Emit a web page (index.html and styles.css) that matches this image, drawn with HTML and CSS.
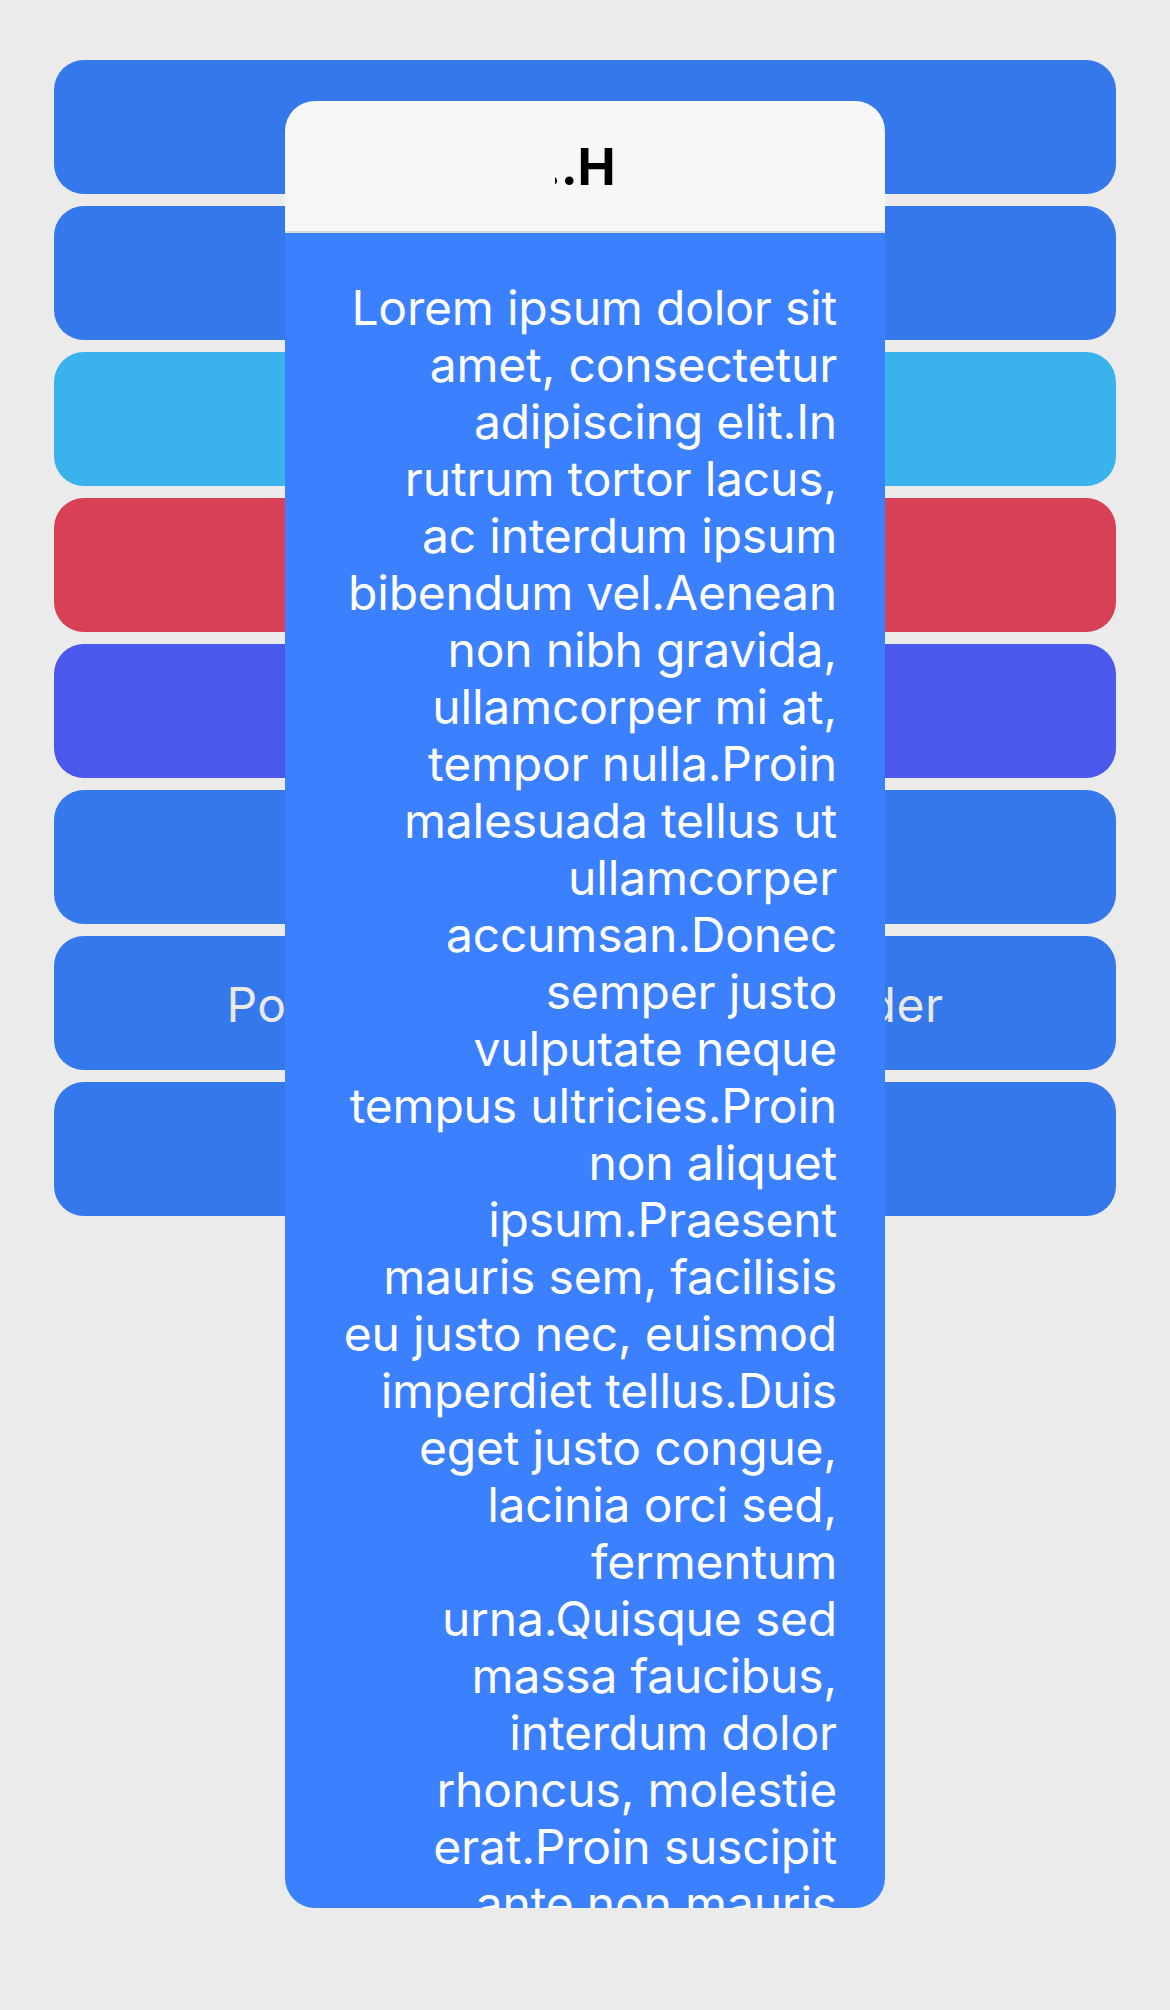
FILE: index.html
```html
<!DOCTYPE html>
<html lang="en">
<head>
<meta charset="utf-8">
<title>Popover demo</title>
<link rel="stylesheet" href="styles.css">
</head>
<body>
<div class="screen">
  <div class="list">
    <button class="btn btn-blue">Default</button>
    <button class="btn btn-blue">Popover</button>
    <button class="btn btn-info">Info</button>
    <button class="btn btn-danger">Danger</button>
    <button class="btn btn-indigo">Primary</button>
    <button class="btn btn-blue">Long text</button>
    <button class="btn btn-blue">Popover with truncated header</button>
    <button class="btn btn-blue">Footer</button>
  </div>

  <div class="popover">
    <div class="popover-header">
      <div class="popover-title"><span class="popover-title-text">Title...H</span></div>
    </div>
    <div class="popover-body">
      <p class="popover-text">Lorem ipsum dolor sit<br>amet, consectetur<br>adipiscing elit.In<br>rutrum tortor lacus,<br>ac interdum ipsum<br>bibendum vel.Aenean<br>non nibh gravida,<br>ullamcorper mi at,<br>tempor nulla.Proin<br>malesuada tellus ut<br>ullamcorper<br>accumsan.Donec<br>semper justo<br>vulputate neque<br>tempus ultricies.Proin<br>non aliquet<br>ipsum.Praesent<br>mauris sem, facilisis<br>eu justo nec, euismod<br>imperdiet tellus.Duis<br>eget justo congue,<br>lacinia orci sed,<br>fermentum<br>urna.Quisque sed<br>massa faucibus,<br>interdum dolor<br>rhoncus, molestie<br>erat.Proin suscipit<br>ante non mauris<br>pretium, vitae<br>tincidunt nisl.</p>
    </div>
  </div>
</div>
</body>
</html>
```

FILE: styles.css
```css
html, body {
  margin: 0;
  padding: 0;
}

body {
  background: #ebebeb;
  font-family: "Inter", "Noto Sans", "Liberation Sans", sans-serif;
}

.screen {
  position: relative;
  width: 1170px;
  height: 2010px;
  overflow: hidden;
}

.list {
  display: flex;
  flex-direction: column;
  gap: 12px;
  padding: 60px 54px 0;
}

.btn {
  display: flex;
  align-items: center;
  justify-content: center;
  height: 134px;
  border: none;
  border-radius: 30px;
  color: #e9e9e9;
  font-family: inherit;
  font-size: 48px;
  letter-spacing: 0.55px;
  white-space: nowrap;
  padding: 3px 0 0;
}

.btn-blue { background: #3478ec; }
.btn-info { background: #3ab3ed; }
.btn-danger { background: #d84155; }
.btn-indigo { background: #4b58ec; }

.popover {
  position: absolute;
  top: 101px;
  left: 285px;
  width: 600px;
  height: 1807px;
  border-radius: 30px;
  overflow: hidden;
  background: #3b80ff;
  display: flex;
  flex-direction: column;
}

.popover-header {
  flex: none;
  height: 130px;
  background: #f7f7f7;
  border-bottom: 2px solid #d9d9d9;
  display: flex;
  align-items: center;
  justify-content: center;
}

.popover-title {
  width: 60px;
  overflow: hidden;
  display: flex;
  justify-content: flex-end;
}

.popover-title-text {
  white-space: nowrap;
  font-size: 51px;
  font-weight: 700;
  color: #000;
  letter-spacing: -0.5px;
}

.popover-body {
  flex: 1;
  padding: 46px 48px 0;
  overflow: hidden;
}

.popover-text {
  margin: 0;
  text-align: right;
  color: #ffffff;
  font-size: 48px;
  line-height: 57px;
  letter-spacing: -0.2px;
  white-space: nowrap;
}
```
